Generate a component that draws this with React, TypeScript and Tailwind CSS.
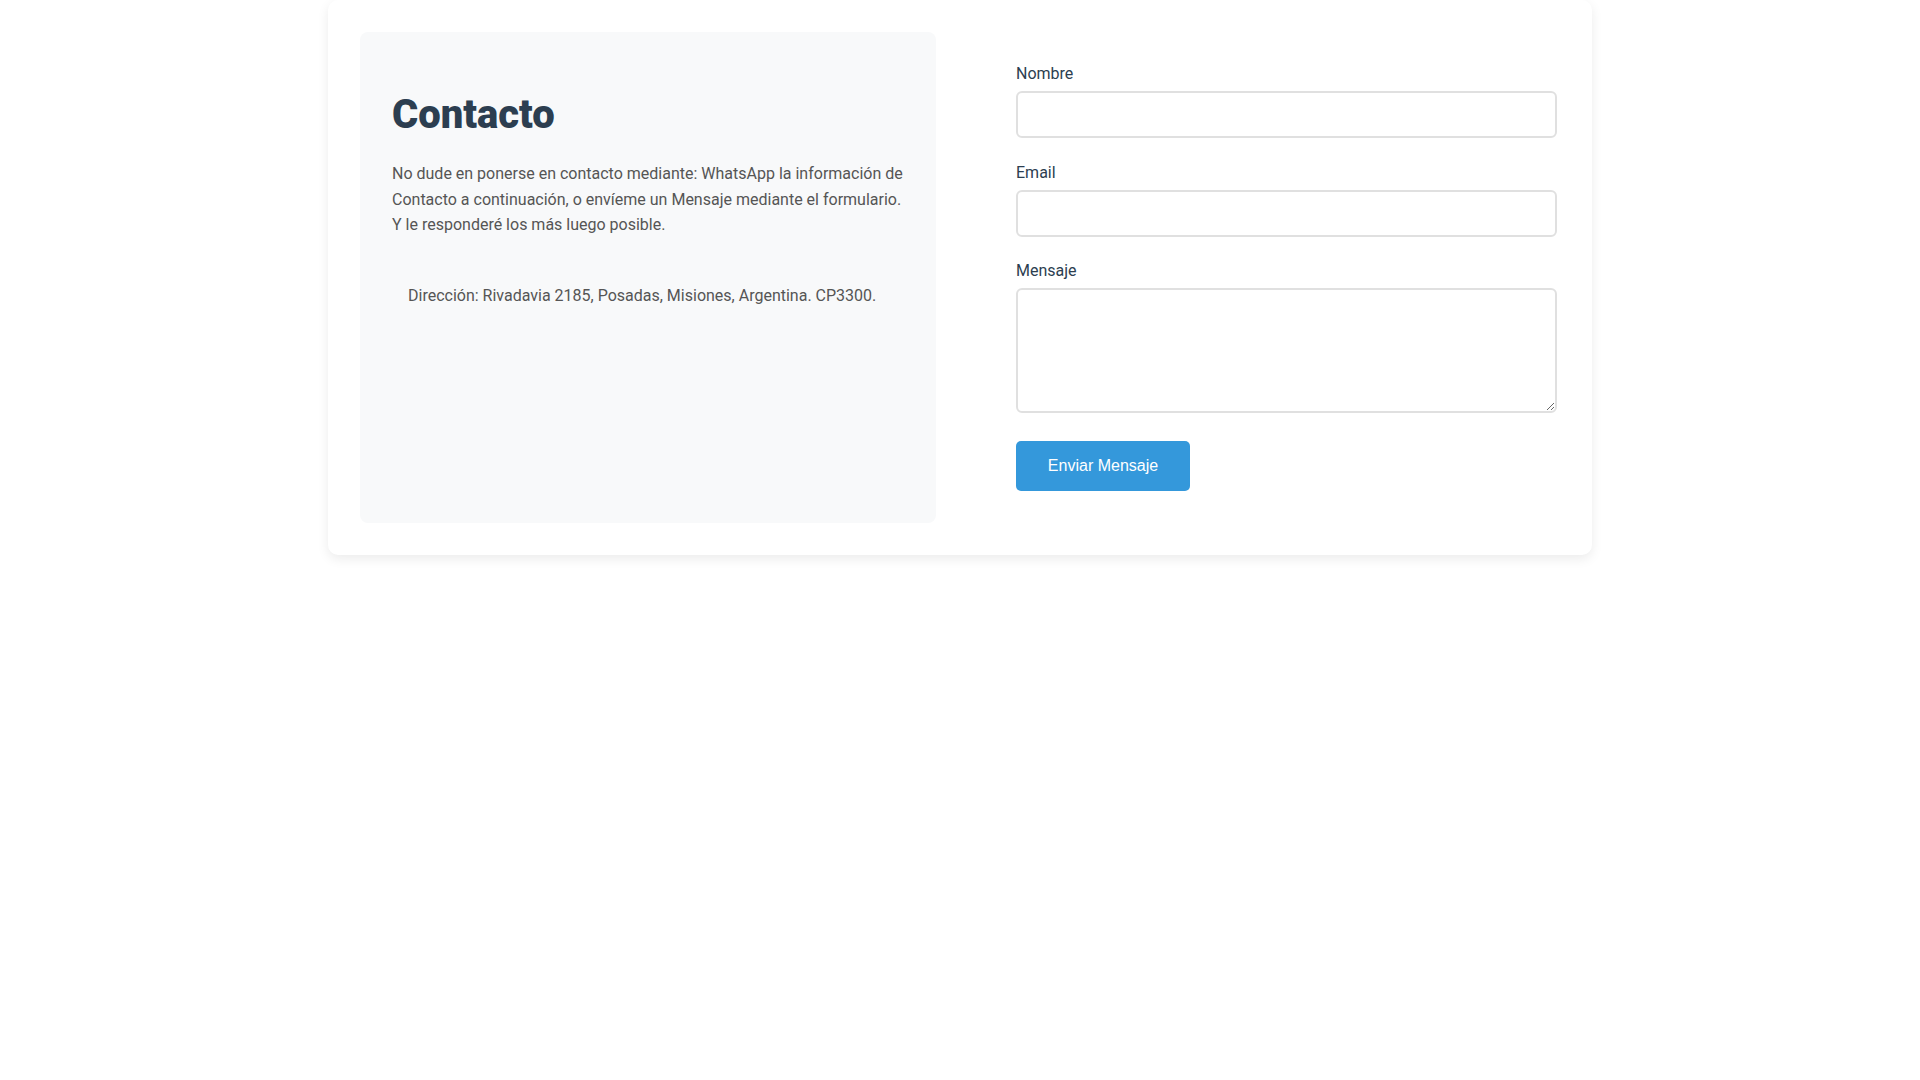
const fields = [
  { label: "Nombre", type: "text", gap: "mb-[25px]" },
  { label: "Email", type: "email", gap: "mb-6" },
];

const App = () => {
  return (
    <div className="min-h-screen bg-white font-['Roboto',sans-serif]">
      <section className="mx-auto w-[1264px] rounded-[10px] bg-white p-8 shadow-[0_4px_12px_rgba(0,0,0,0.08)]">
        <div className="grid grid-cols-[576px_1fr] gap-12">
          <div className="rounded-lg bg-[#f8f9fa] p-8">
            <h2 className="mt-[31px] text-[40px] leading-10 font-black text-[#2c3e50]">Contacto</h2>
            <p className="mt-[26px] text-base leading-[1.6] text-[#555]">
              No dude en ponerse en contacto mediante: WhatsApp la información de Contacto a continuación, o envíeme un Mensaje mediante el formulario. Y le responderé los más luego posible.
            </p>
            <div className="mt-[45px] pl-4 text-base leading-[1.6] text-[#555]">
              Dirección: Rivadavia 2185, Posadas, Misiones, Argentina. CP3300.
            </div>
          </div>

          <form className="py-8 pl-8 pr-[3px]">
            {fields.map((field) => (
              <div key={field.label} className={field.gap}>
                <label className="mb-2 block text-base leading-[19px] font-normal text-[#2c3e50]">{field.label}</label>
                <input
                  type={field.type}
                  className="block h-[47px] w-full rounded-md border-2 border-[#e0e0e0] bg-white px-3 outline-none"
                />
              </div>
            ))}
            <div className="mb-[28px]">
              <label className="mb-2 block text-base leading-[19px] font-normal text-[#2c3e50]">Mensaje</label>
              <textarea className="block h-[125px] w-full resize-y rounded-md border-2 border-[#e0e0e0] bg-white px-3 py-2 outline-none" />
            </div>
            <button
              type="button"
              className="h-[50px] w-[174px] rounded-[5px] bg-[#3498db] font-['Liberation_Sans',Arial,sans-serif] text-base text-white"
            >
              Enviar Mensaje
            </button>
          </form>
        </div>
      </section>
    </div>
  );
};

export default App;
